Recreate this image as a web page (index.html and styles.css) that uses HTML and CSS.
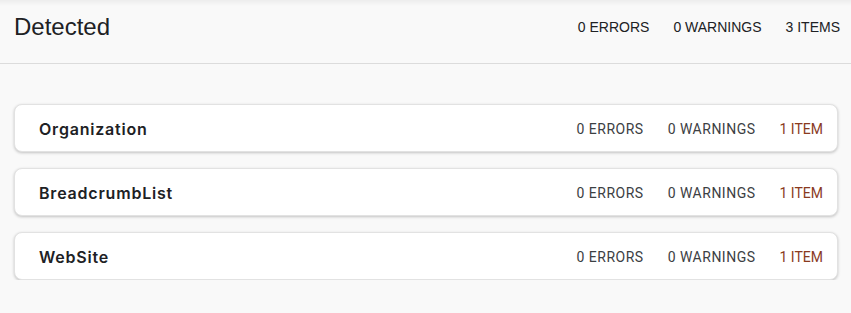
FILE: index.html
```html
<!DOCTYPE html>
<html>
<head>
<meta charset="utf-8">
<link rel="stylesheet" href="styles.css">
</head>
<body>
<header class="top">
  <h1 class="title">Detected</h1>
  <div class="summary">
    <span>0 ERRORS</span>
    <span>0 WARNINGS</span>
    <span>3 ITEMS</span>
  </div>
</header>
<main class="list">
  <div class="card">
    <span class="name">Organization</span>
    <div class="stats"><span>0 ERRORS</span><span>0 WARNINGS</span><span class="items">1 ITEM</span></div>
  </div>
  <div class="card">
    <span class="name">BreadcrumbList</span>
    <div class="stats"><span>0 ERRORS</span><span>0 WARNINGS</span><span class="items">1 ITEM</span></div>
  </div>
  <div class="card">
    <span class="name">WebSite</span>
    <div class="stats"><span>0 ERRORS</span><span>0 WARNINGS</span><span class="items">1 ITEM</span></div>
  </div>
</main>
</body>
</html>
```
FILE: styles.css
```css
html, body {
  margin: 0;
  padding: 0;
  background: #f9f9f9;
}
.top {
  height: 64px;
  box-sizing: border-box;
  display: flex;
  align-items: center;
  justify-content: space-between;
  padding: 0 11px 9px 14px;
  border-bottom: 1px solid #dcdcdc;
  background: linear-gradient(#ededed 0, #f9f9f9 6px);
  font-family: "Liberation Sans", Arial, sans-serif;
}
.title {
  margin: 0;
  font-size: 24px;
  font-weight: 400;
  color: #202124;
}
.summary {
  display: flex;
  gap: 24px;
  font-size: 14px;
  color: #202124;
}
.list {
  display: flex;
  flex-direction: column;
  gap: 16px;
  padding: 40px 13px 0 14px;
}
.card {
  height: 48px;
  box-sizing: border-box;
  display: flex;
  align-items: center;
  justify-content: space-between;
  padding: 1px 14px 0 24px;
  background: #fff;
  border: 1px solid #e2e2e2;
  border-radius: 8px;
  box-shadow: 0 1px 3px rgba(0,0,0,0.22);
}
.name {
  font-family: Inter, "Open Sans", sans-serif;
  font-weight: 600;
  font-size: 16px;
  letter-spacing: 0.8px;
  color: #202124;
}
.stats {
  display: flex;
  gap: 24px;
  padding-top: 1px;
  font-family: Roboto, sans-serif;
  font-size: 14px;
  letter-spacing: 0.5px;
  color: #3c4043;
}
.stats .items {
  color: #8a3a1e;
  letter-spacing: 0;
}
```
